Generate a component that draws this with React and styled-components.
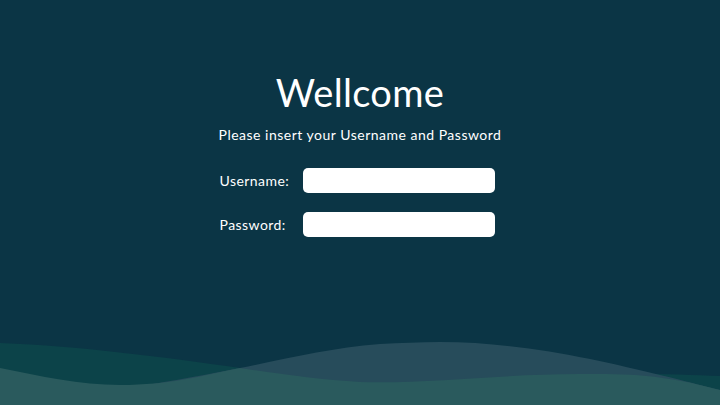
import React from 'react'
import styled, { createGlobalStyle } from 'styled-components'

const GlobalStyle = createGlobalStyle`
  html, body {
    margin: 0;
    padding: 0;
    background: #0b3545;
  }
  body {
    font-family: Lato, "Open Sans", sans-serif;
  }
`

const Page = styled.div`
  display: flex;
  flex-direction: column;
  width: 720px;
  height: 405px;
  overflow: hidden;
  background: #0b3545;
  color: #ffffff;
`

const Main = styled.main`
  display: flex;
  flex-direction: column;
  align-items: center;
  padding-top: 69px;
`

const Title = styled.h1`
  margin: 0;
  font-size: 38px;
  font-weight: 400;
  line-height: 46px;
  letter-spacing: 0.3px;
`

const Subtitle = styled.p`
  margin: 10px 0 0;
  font-size: 14px;
  line-height: 20px;
  letter-spacing: 0.5px;
`

const Form = styled.form`
  display: flex;
  flex-direction: column;
  gap: 19px;
  width: 281px;
  margin-top: 23px;
`

const Row = styled.label`
  display: flex;
  align-items: center;
  font-size: 14px;
  letter-spacing: 0.45px;
`

const Label = styled.span`
  width: 83px;
  flex: none;
`

const Input = styled.input`
  width: 192px;
  height: 25px;
  box-sizing: border-box;
  border: none;
  border-radius: 5px;
  background: #ffffff;
  outline: none;
  font: inherit;
  padding: 0 8px;
`

const Waves = styled.svg`
  display: block;
  margin-top: auto;
  width: 720px;
  height: 65px;
  flex: none;
`

const App = () => (
  <>
    <GlobalStyle />
    <Page>
      <Main>
        <Title>Wellcome</Title>
        <Subtitle>Please insert your Username and Password</Subtitle>
        <Form onSubmit={e => e.preventDefault()}>
          <Row>
            <Label>Username:</Label>
            <Input type="text" />
          </Row>
          <Row>
            <Label>Password:</Label>
            <Input type="password" />
          </Row>
        </Form>
      </Main>
      <Waves viewBox="0 0 720 65" preserveAspectRatio="none">
        {/* svg top sits at page y=340 */}
        <path
          d="M0 3 C80 6 170 18 240 28 C350 40 500 40 600 34 C650 33 690 35 720 36 L720 65 L0 65 Z"
          fill="#0c4349"
        />
        <path
          d="M0 60 C100 55 180 40 240 28 C290 18 330 8 380 4 C400 3 420 2 440 2 C520 2 600 20 660 35 C690 42 710 48 720 50 L720 65 L0 65 Z"
          fill="#274c5b"
        />
        <path
          d="M0 28 C40 36 80 45 120 45 C170 45 200 36 240 28 C280 34 320 40 360 42 C430 44 500 34 580 34 C630 34 660 34 720 50 L720 65 L0 65 Z"
          fill="#2a5a5d"
        />
      </Waves>
    </Page>
  </>
)

export default App
